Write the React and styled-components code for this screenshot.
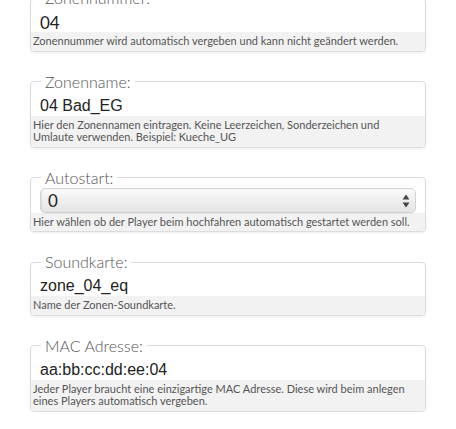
import React from "react";
import styled, { createGlobalStyle } from "styled-components";

const GlobalStyle = createGlobalStyle`
  html, body {
    margin: 0;
    padding: 0;
    background: #fff;
    overflow: hidden;
  }
`;

const Form = styled.form`
  margin-top: -12px;
  padding: 0 30px;
  display: flex;
  flex-direction: column;
  gap: 20px;
`;

const Field = styled.fieldset`
  margin: 0;
  padding: 0;
  border: 1px solid #dcdcdc;
  border-radius: 4px;
  box-shadow: 0 1px 2px rgba(0, 0, 0, 0.08);
  min-width: 0;
`;

const Legend = styled.legend`
  margin-left: 10px;
  padding: 0 4px;
  font-family: Lato, "Open Sans", sans-serif;
  font-weight: 300;
  font-size: 16px;
  line-height: 20px;
  color: #555;
`;

const Input = styled.input`
  display: block;
  box-sizing: border-box;
  width: 100%;
  margin: 0;
  border: none;
  outline: none;
  background: transparent;
  padding: 4px 9px 0;
  height: 24px;
  font-family: ${(p) =>
    p.$plain ? 'Lato, "Open Sans", sans-serif' : '"Liberation Sans", Arial, sans-serif'};
  font-size: ${(p) => (p.$plain ? "17px" : "16px")};
  line-height: 20px;
  color: #222;
`;

const SelectWrap = styled.div`
  position: relative;
  margin: 0 9px 0 9px;
`;

const Select = styled.select`
  display: block;
  box-sizing: border-box;
  width: 100%;
  height: 25px;
  margin: 0;
  padding: 0 24px 0 7px;
  appearance: none;
  -webkit-appearance: none;
  border: 1px solid #d4d4d4;
  border-radius: 5px;
  background: linear-gradient(to bottom, #fbfbfb 0%, #ececec 60%, #e4e4e4 100%);
  box-shadow: inset 1px 0 1px rgba(0, 0, 0, 0.08), 0 1px 1px rgba(0, 0, 0, 0.06);
  font-family: Lato, "Open Sans", sans-serif;
  font-size: 17px;
  color: #222;
  outline: none;
`;

const Arrows = styled.svg`
  position: absolute;
  right: 6px;
  top: 6px;
  pointer-events: none;
`;

const Help = styled.div`
  background: #f2f2f2;
  padding: 3px 11px 3px 2px;
  font-family: Lato, "Open Sans", sans-serif;
  font-size: 11px;
  line-height: 12.5px;
  color: #555;
  border-radius: 0 0 3px 3px;
`;

const fields = [
  {
    label: "Zonennummer:",
    value: "04",
    plain: true,
    help: "Zonennummer wird automatisch vergeben und kann nicht geändert werden.",
  },
  {
    label: "Zonenname:",
    value: "04 Bad_EG",
    help: "Hier den Zonennamen eintragen. Keine Leerzeichen, Sonderzeichen und Umlaute verwenden. Beispiel: Kueche_UG",
  },
  {
    label: "Autostart:",
    select: ["0", "1"],
    value: "0",
    help: "Hier wählen ob der Player beim hochfahren automatisch gestartet werden soll.",
  },
  {
    label: "Soundkarte:",
    value: "zone_04_eq",
    help: "Name der Zonen-Soundkarte.",
  },
  {
    label: "MAC Adresse:",
    value: "aa:bb:cc:dd:ee:04",
    help: "Jeder Player braucht eine einzigartige MAC Adresse. Diese wird beim anlegen eines Players automatisch vergeben.",
  },
];

export default function App() {
  return (
    <>
      <GlobalStyle />
      <Form onSubmit={(e) => e.preventDefault()}>
        {fields.map((f) => (
          <Field key={f.label}>
            <Legend>{f.label}</Legend>
            {f.select ? (
              <SelectWrap>
                <Select defaultValue={f.value}>
                  {f.select.map((o) => (
                    <option key={o}>{o}</option>
                  ))}
                </Select>
                <Arrows width="8" height="14" viewBox="0 0 8 14">
                  <path d="M4 0.5 L7.5 5.5 L0.5 5.5 Z" fill="#444" />
                  <path d="M4 13.5 L7.5 8.5 L0.5 8.5 Z" fill="#444" />
                </Arrows>
              </SelectWrap>
            ) : (
              <Input $plain={f.plain} defaultValue={f.value} readOnly={f.plain} />
            )}
            <Help>{f.help}</Help>
          </Field>
        ))}
      </Form>
    </>
  );
}
